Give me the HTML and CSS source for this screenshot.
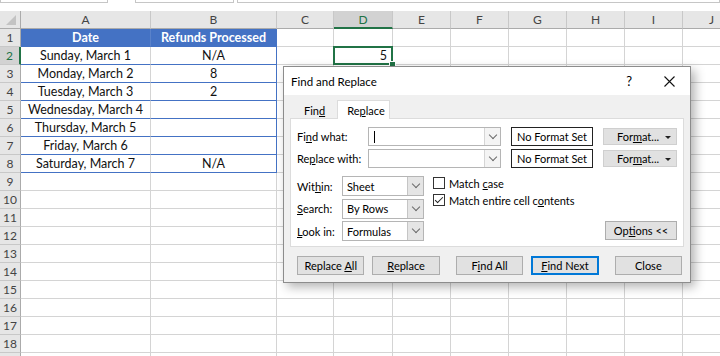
FILE: index.html
```html
<!DOCTYPE html>
<html lang="en">
<head>
    <meta charset="UTF-8">
    <meta name="viewport" content="width=device-width, initial-scale=1.0">
    <title>Find and Replace</title>
    <link rel="stylesheet" href="styles.css">
</head>
<body>
    <div class="topbar">
        <div class="box namebox"></div>
        <div class="box fxbox"></div>
        <div class="box formula"></div>
    </div>

    <div class="sheet" id="sheet">
        <div class="corner"><span class="tri"></span></div>
        <div class="ch">A</div>
        <div class="ch">B</div>
        <div class="ch">C</div>
        <div class="ch active">D</div>
        <div class="ch">E</div>
        <div class="ch">F</div>
        <div class="ch">G</div>
        <div class="ch">H</div>
        <div class="ch">I</div>
        <div class="ch">J</div>
    </div>

    <div class="dialog">
        <div class="titlebar">
            <span class="title">Find and Replace</span>
            <span class="help">?</span>
            <span class="close">
                <svg width="11" height="11" viewBox="0 0 11 11"><path d="M0.5 0.5 L10.5 10.5 M10.5 0.5 L0.5 10.5" stroke="#111" stroke-width="1.1"/></svg>
            </span>
        </div>

        <div class="tabs">
            <div class="tab"><span>Fin<u>d</u></span></div>
            <div class="tab active"><span>Re<u>p</u>lace</span></div>
        </div>

        <div class="panel">
            <div class="field">
                <label>Fi<u>n</u>d what:</label>
                <div class="combo"><span class="caret"></span><span class="drop"></span></div>
                <div class="fmtset">No Format Set</div>
                <div class="btn fmt"><span>For<u>m</u>at...</span><span class="arrow"></span></div>
            </div>
            <div class="field">
                <label>Re<u>p</u>lace with:</label>
                <div class="combo"><span class="drop"></span></div>
                <div class="fmtset">No Format Set</div>
                <div class="btn fmt"><span>For<u>m</u>at...</span><span class="arrow"></span></div>
            </div>

            <div class="opts">
                <div class="optcol">
                    <div class="opt"><label>Wit<u>h</u>in:</label><div class="select"><span>Sheet</span><span class="drop"></span></div></div>
                    <div class="opt"><label><u>S</u>earch:</label><div class="select"><span>By Rows</span><span class="drop"></span></div></div>
                    <div class="opt"><label><u>L</u>ook in:</label><div class="select"><span>Formulas</span><span class="drop"></span></div></div>
                </div>
                <div class="checks">
                    <div class="check"><span class="cbox"></span><span>Match <u>c</u>ase</span></div>
                    <div class="check"><span class="cbox on"></span><span>Match entire cell c<u>o</u>ntents</span></div>
                </div>
                <div class="btn options"><span>Op<u>t</u>ions &lt;&lt;</span></div>
            </div>
        </div>

        <div class="actions">
            <div class="btn"><span>Replace <u>A</u>ll</span></div>
            <div class="btn"><span><u>R</u>eplace</span></div>
            <div class="btn wide"><span>F<u>i</u>nd All</span></div>
            <div class="btn default"><span><u>F</u>ind Next</span></div>
            <div class="btn wide"><span>Close</span></div>
        </div>
    </div>

    <script>
        const sheet = document.getElementById('sheet');
        const datos = [
            ['Sunday, March 1', 'N/A'],
            ['Monday, March 2', '8'],
            ['Tuesday, March 3', '2'],
            ['Wednesday, March 4', ''],
            ['Thursday, March 5', ''],
            ['Friday, March 6', ''],
            ['Saturday, March 7', 'N/A']
        ];

        function celdas(n) {
            return '<div class="c"></div>'.repeat(n);
        }

        let html = '<div class="rh">1</div><div class="c th">Date</div><div class="c th last">Refunds Processed</div>' + celdas(8);

        datos.forEach((fila, i) => {
            const n = i + 2;
            html += `<div class="rh${n === 2 ? ' active' : ''}">${n}</div>`;
            html += `<div class="c td">${fila[0]}</div><div class="c td last">${fila[1]}</div>`;
            if (n === 2) {
                html += '<div class="c"></div><div class="c sel">5</div>' + celdas(6);
            } else {
                html += celdas(8);
            }
        });

        // filas vacias (la 19 apenas se ve, sin numero)
        for (let n = 9; n <= 19; n++) {
            html += `<div class="rh">${n < 19 ? n : ''}</div>` + celdas(10);
        }

        sheet.insertAdjacentHTML('beforeend', html);
    </script>
</body>
</html>
```

FILE: styles.css
```css
html, body {
    margin: 0;
    padding: 0;
    overflow: hidden;
}
body {
    width: 720px;
    height: 356px;
    position: relative;
    background-color: #fff;
    font-family: Lato, "Liberation Sans", sans-serif;
}
.topbar {
    height: 11px;
    display: flex;
}
.topbar .box {
    height: 2px;
    border: 1px solid #c6c6c6;
    border-top: none;
}
.namebox {
    width: 106px;
}
.fxbox {
    width: 97px;
    margin-left: 27px;
}
.formula {
    flex: 1;
    margin-left: 3px;
}

/* hoja */
.sheet {
    display: grid;
    grid-template-columns: 21px 130px 126px 57px 59px repeat(6, 58px);
    grid-auto-rows: 18px;
    width: 741px;
}
.c, .ch, .rh, .corner {
    box-sizing: border-box;
    border-right: 1px solid #d4d4d4;
    border-bottom: 1px solid #d4d4d4;
    display: flex;
    align-items: center;
    justify-content: center;
    font-size: 12.5px;
    color: #111;
    white-space: nowrap;
}
.corner {
    background-color: #e6e6e6;
    border-right-color: #ababab;
    border-bottom-color: #ababab;
    justify-content: flex-end;
    align-items: flex-end;
    padding: 0 4px 3px 0;
}
.tri {
    width: 0;
    height: 0;
    border-left: 10px solid transparent;
    border-bottom: 10px solid #c3c3c3;
}
.ch {
    background-color: #e6e6e6;
    color: #444;
    font-size: 12px;
    border-right-color: #c8c8c8;
    border-bottom-color: #ababab;
}
.ch.active {
    background-color: #d2d2d2;
    color: #217346;
    border-bottom: 2px solid #217346;
}
.rh {
    background-color: #e6e6e6;
    color: #444;
    font-size: 12px;
    border-right-color: #ababab;
    border-bottom-color: #c8c8c8;
}
.rh.active {
    background-color: #d2d2d2;
    color: #217346;
    border-right: 2px solid #217346;
}
.th {
    background-color: #4472c4;
    color: #fff;
    font-weight: bold;
    border-right-color: #5a82ca;
    border-bottom-color: #4472c4;
}
.td {
    border-bottom-color: #4472c4;
}
.last {
    border-right-color: #4472c4;
}
.sel {
    position: relative;
    justify-content: flex-end;
    padding-right: 5px;
}
.sel::before {
    content: "";
    position: absolute;
    left: -1px;
    top: -1px;
    right: -1px;
    bottom: -1px;
    border: 2px solid #217346;
}
.sel::after {
    content: "";
    position: absolute;
    right: -4px;
    bottom: -4px;
    width: 5px;
    height: 5px;
    background-color: #217346;
    border: 1px solid #fff;
}

/* dialogo */
.dialog {
    position: absolute;
    left: 283px;
    top: 66px;
    width: 406px;
    background-color: #f0f0f0;
    border: 1px solid #8c8c8c;
    box-shadow: 4px 4px 10px rgba(0,0,0,0.3);
    font-size: 11px;
    color: #000;
    padding-bottom: 7px;
}
.titlebar {
    height: 28px;
    background-color: #fff;
    display: flex;
    align-items: center;
    padding-left: 7px;
    font-size: 11.5px;
}
.title {
    flex: 1;
}
.help {
    font-size: 13px;
    margin-right: 32px;
}
.close {
    display: flex;
    margin-right: 15px;
}
.tabs {
    display: flex;
    align-items: flex-end;
    margin: 5px 0 0 6px;
    height: 18px;
}
.tab {
    box-sizing: border-box;
    height: 16px;
    padding: 0 12px 0 14px;
    display: flex;
    align-items: center;
}
.tab.active {
    height: 19px;
    margin: 0 0 -1px 0;
    background-color: #fff;
    border: 1px solid #dcdcdc;
    border-bottom: none;
    position: relative;
    padding: 0 9px;
    width: 53px;
}
.panel {
    box-sizing: border-box;
    margin: 0 6px;
    height: 129px;
    background-color: #fff;
    border: 1px solid #dcdcdc;
    padding: 8px 6px 0 6px;
}
.field {
    display: flex;
    align-items: center;
    height: 19px;
    margin-bottom: 3px;
}
.field label {
    width: 71px;
}
.combo {
    box-sizing: border-box;
    width: 133px;
    height: 19px;
    border: 1px solid #b5b5b5;
    display: flex;
    align-items: center;
}
.caret {
    width: 1px;
    height: 12px;
    background-color: #000;
    margin-left: 5px;
}
.drop {
    box-sizing: border-box;
    width: 16px;
    height: 100%;
    margin-left: auto;
    border-left: 1px solid #d5d5d5;
    background-color: #f4f4f4;
    display: flex;
    align-items: center;
    justify-content: center;
}
.drop::after {
    content: "";
    width: 5px;
    height: 5px;
    border-right: 1px solid #6a6a6a;
    border-bottom: 1px solid #6a6a6a;
    transform: rotate(45deg);
    margin-top: -4px;
}
.fmtset {
    box-sizing: border-box;
    width: 82px;
    height: 19px;
    margin-left: 10px;
    border: 1px solid #222;
    display: flex;
    align-items: center;
    justify-content: center;
}
.btn {
    box-sizing: border-box;
    height: 19px;
    background-color: #e1e1e1;
    border: 1px solid #adadad;
    display: flex;
    align-items: center;
    justify-content: center;
    white-space: nowrap;
}
.fmt {
    width: 74px;
    height: 17px;
    margin-left: 10px;
    border-color: #cfcfcf;
    position: relative;
    padding-right: 4px;
}
.arrow {
    position: absolute;
    right: 5px;
    top: 7px;
    border-left: 3px solid transparent;
    border-right: 3px solid transparent;
    border-top: 3px solid #222;
}
.opts {
    display: flex;
    margin-top: 8px;
}
.optcol {
    display: flex;
    flex-direction: column;
    gap: 2.5px;
}
.opt {
    display: flex;
    align-items: center;
}
.opt label {
    width: 45px;
}
.select {
    box-sizing: border-box;
    width: 82px;
    height: 20px;
    border: 1px solid #b5b5b5;
    display: flex;
    align-items: center;
    padding-left: 4px;
}
.select .drop {
    background-color: #e5e5e5;
    border-left-color: #c5c5c5;
}
.checks {
    margin-left: 9px;
    display: flex;
    flex-direction: column;
    gap: 5px;
    padding-top: 1px;
}
.check {
    display: flex;
    align-items: center;
    height: 12px;
}
.cbox {
    box-sizing: border-box;
    width: 12px;
    height: 12px;
    border: 1px solid #333;
    background-color: #fff;
    margin-right: 4px;
    display: flex;
    justify-content: center;
}
.cbox.on::after {
    content: "";
    width: 3px;
    height: 7px;
    border-right: 1px solid #222;
    border-bottom: 1px solid #222;
    transform: rotate(45deg);
}
.options {
    width: 72px;
    margin-left: auto;
    align-self: flex-end;
    margin-bottom: 1px;
}
.actions {
    display: flex;
    margin: 9px 0 0 13px;
}
.actions .btn {
    width: 68px;
    margin-right: 8px;
}
.actions .wide {
    margin-left: 8px;
}
.actions .default {
    border-color: #0078d7;
    box-shadow: inset 0 0 0 1px #0078d7;
}
```
